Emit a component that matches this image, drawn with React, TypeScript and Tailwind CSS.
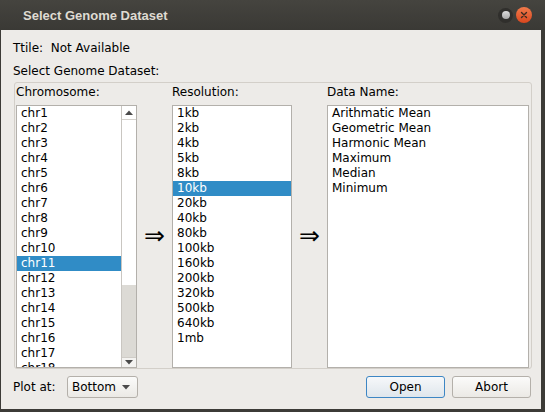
import React from "react";

const chroms = Array.from({ length: 18 }, (_, i) => `chr${i + 1}`);
const resolutions = ["1kb", "2kb", "4kb", "5kb", "8kb", "10kb", "20kb", "40kb", "80kb", "100kb", "160kb", "200kb", "320kb", "500kb", "640kb", "1mb"];
const dataNames = ["Arithmatic Mean", "Geometric Mean", "Harmonic Mean", "Maximum", "Median", "Minimum"];

function Item({ text, selected }: { text: string; selected?: boolean }) {
  return (
    <div className={`h-[15px] pl-[4px] whitespace-nowrap ${selected ? "bg-[#308cc6] text-white" : "text-black"}`}>{text}</div>
  );
}

function Arrow() {
  return (
    <div className="flex-1 flex flex-col">
      <div className="h-[21px]" />
      <div className="h-[263px] flex items-center justify-center text-[25px] leading-[25px] text-black pb-[2px]">⇒</div>
    </div>
  );
}

export default function App() {
  return (
    <div className="w-[545px] h-[412px] flex flex-col bg-[#3c3b37] font-['DejaVu_Sans',sans-serif] text-[12px] leading-[15px] text-black">
      {/* Title bar */}
      <div className="h-[30px] flex items-center bg-gradient-to-b from-[#45443f] to-[#3a3935] pl-[23px] pr-[13px]">
        <div className="font-['Liberation_Sans',sans-serif] font-bold text-[13px] text-[#dfdbd2] pt-[1px]">Select Genome Dataset</div>
        <div className="flex-1" />
        <div className="w-[15px] h-[15px] rounded-full bg-[#302f2c] flex items-center justify-center mr-[3px]">
          <div className="w-[8px] h-[8px] rounded-full bg-gradient-to-b from-[#dcdcdc] to-[#a9a9a9]" />
        </div>
        <div className="w-[16px] h-[16px] rounded-full bg-gradient-to-b from-[#f07a4a] to-[#d9461d] flex items-center justify-center">
          <svg width="8" height="8" viewBox="0 0 8 8">
            <path d="M1.5 1.5 L6.5 6.5 M6.5 1.5 L1.5 6.5" stroke="#3c2a20" strokeWidth="1.4" strokeLinecap="round" />
          </svg>
        </div>
      </div>

      {/* Body */}
      <div className="flex-1 ml-[1px] mr-[4px] mb-[3px] bg-[#edebe8] flex flex-col pl-[12px] pr-[9px] pt-[11px]">
        <div className="h-[15px] whitespace-pre">Ttile:  Not Available</div>
        <div className="h-[15px] mt-[8px]">Select Genome Dataset:</div>

        {/* group box */}
        <div className="mt-[3px] ml-[1px] h-[287px] border border-[#d3cfc9] rounded-[3px] pt-[1px] pl-[1px] pr-[2px] flex">
          {/* Chromosome */}
          <div className="w-[121px] flex flex-col">
            <div className="h-[15px] mt-[1px]">Chromosome:</div>
            <div className="mt-[5px] h-[263px] border border-[#b3b0ab] bg-white flex overflow-hidden">
              <div className="w-[104px] flex flex-col overflow-hidden">
                {chroms.map((c) => (
                  <Item key={c} text={c} selected={c === "chr11"} />
                ))}
              </div>
              <div className="w-[15px] border-l border-[#c9c6c1] flex flex-col">
                <div className="h-[14px] border-b border-[#d4d1cc] bg-white flex items-center justify-center">
                  <svg width="8" height="5" viewBox="0 0 8 5"><path d="M0 5 L4 0.5 L8 5 Z" fill="#4a4a4a" /></svg>
                </div>
                <div className="h-[165px] bg-white" />
                <div className="flex-1 bg-[#dcdad5]" />
                <div className="h-[10px] border-t border-[#cfccc7] bg-[#f4f3f1] flex items-center justify-center">
                  <svg width="8" height="5" viewBox="0 0 8 5"><path d="M0 0 L8 0 L4 4.5 Z" fill="#4a4a4a" /></svg>
                </div>
              </div>
            </div>
          </div>

          <Arrow />

          {/* Resolution */}
          <div className="w-[120px] flex flex-col">
            <div className="h-[15px] mt-[1px]">Resolution:</div>
            <div className="mt-[5px] h-[263px] border border-[#b3b0ab] bg-white flex flex-col overflow-hidden">
              {resolutions.map((r) => (
                <Item key={r} text={r} selected={r === "10kb"} />
              ))}
            </div>
          </div>

          <Arrow />

          {/* Data name */}
          <div className="w-[202px] flex flex-col">
            <div className="h-[15px] mt-[1px]">Data Name:</div>
            <div className="mt-[5px] h-[263px] border border-[#b3b0ab] bg-white flex flex-col overflow-hidden">
              {dataNames.map((d) => (
                <Item key={d} text={d} />
              ))}
            </div>
          </div>
        </div>

        {/* Bottom row */}
        <div className="mt-[7px] h-[22px] flex items-center">
          <div className="w-[54px]">Plot at:</div>
          <div className="w-[71px] h-[22px] border border-[#b4b0aa] rounded-[3px] bg-gradient-to-b from-[#fbfbfa] to-[#ebe9e5] flex items-center pl-[4px] pr-[7px]">
            <span>Bottom</span>
            <div className="flex-1" />
            <svg width="8" height="5" viewBox="0 0 8 5"><path d="M0 0 L8 0 L4 4.5 Z" fill="#4a4a4a" /></svg>
          </div>
          <div className="flex-1" />
          <div className="w-[79px] h-[22px] border border-[#3d86c4] rounded-[3px] bg-gradient-to-b from-[#f6f8fa] to-[#dfe6ec] flex items-center justify-center">Open</div>
          <div className="w-[79px] h-[22px] ml-[7px] mr-[1px] border border-[#b4b0aa] rounded-[3px] bg-gradient-to-b from-[#fbfbfa] to-[#ebe9e5] flex items-center justify-center">Abort</div>
        </div>
      </div>
    </div>
  );
}
